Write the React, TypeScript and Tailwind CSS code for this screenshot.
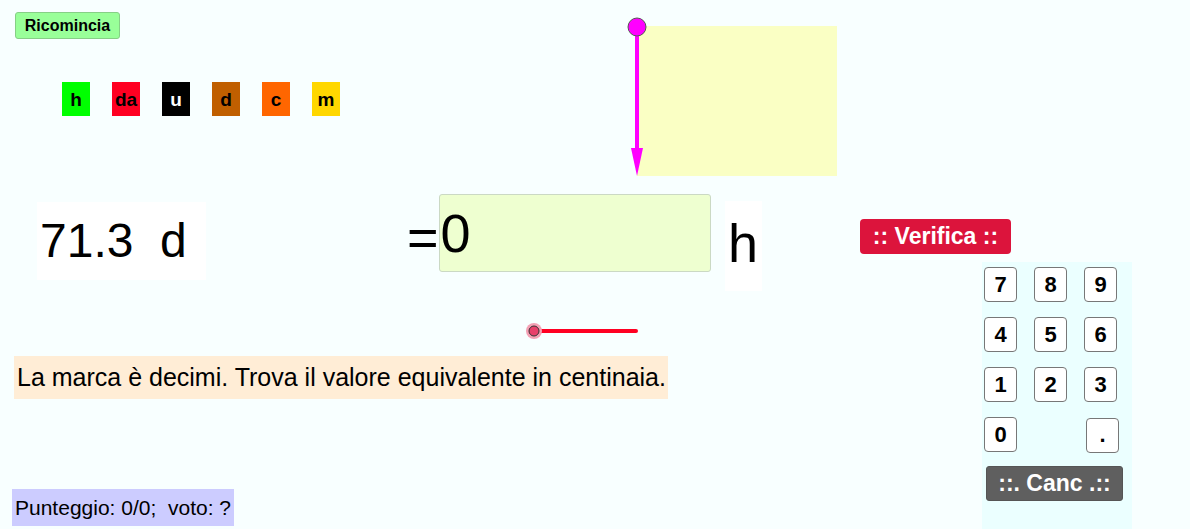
import React from 'react';

const units = [
  { label: 'h', cls: 'bg-[#00ff00] text-black' },
  { label: 'da', cls: 'bg-[#ff0022] text-black' },
  { label: 'u', cls: 'bg-black text-white' },
  { label: 'd', cls: 'bg-[#c05f00] text-black' },
  { label: 'c', cls: 'bg-[#ff6600] text-black' },
  { label: 'm', cls: 'bg-[#ffd700] text-black' },
];

const keyRows = [['7', '8', '9'], ['4', '5', '6'], ['1', '2', '3']];

const Key: React.FC<{ label: string; className?: string }> = ({ label, className = '' }) => (
  <button
    className={`flex h-[35px] w-[33px] items-center justify-center rounded-[4px] border border-[#777] bg-white text-[22px] font-bold leading-none text-black ${className}`}
  >
    {label}
  </button>
);

const App: React.FC = () => {
  return (
    <div
      className="relative h-[529px] w-[1190px] overflow-hidden bg-[#f8ffff] text-black"
      style={{ fontFamily: '"Liberation Sans", Arial, sans-serif' }}
    >
      {/* Restart + unit legend */}
      <div className="absolute left-[15px] top-[12px] flex flex-col items-start gap-[43px]">
        <button className="flex h-[27px] w-[105px] items-center justify-center rounded-[3px] border border-[#86cf86] bg-[#99ff99] text-[16px] font-bold leading-none">
          Ricomincia
        </button>
        <div className="ml-[47px] flex gap-[22px]">
          {units.map((u) => (
            <div
              key={u.label}
              className={`flex h-[34px] w-[28px] items-center justify-center text-[19px] font-bold leading-none ${u.cls}`}
            >
              {u.label}
            </div>
          ))}
        </div>
      </div>

      {/* Yellow area + vector */}
      <div className="absolute left-[637px] top-[26px] h-[150px] w-[200px] bg-[#faffc4]" />
      <svg className="absolute left-[620px] top-[10px]" width="40" height="170" viewBox="0 0 40 170">
        <line x1="17" y1="17" x2="17" y2="140" stroke="#ff00ff" strokeWidth="4" />
        <polygon points="11,138 23,138 17,166" fill="#ff00ff" />
        <circle cx="17" cy="17" r="9" fill="#ff00ff" stroke="#555" strokeWidth="1" />
      </svg>

      {/* Given value */}
      <div className="absolute left-[37px] top-[202px] flex h-[78px] w-[169px] items-center bg-white pl-[3px] text-[48px] leading-none whitespace-pre">
        71.3  d
      </div>

      {/* Equation */}
      <div className="absolute left-[407px] top-[194px] flex items-start">
        <span className="pt-[16px] text-[54px] leading-none">=</span>
        <div className="flex h-[78px] w-[272px] items-start rounded-[3px] border border-[#cbd9c4] bg-[#eeffd0] pl-[1px] pt-[11px] text-[54px] leading-none">
          0
        </div>
        <div className="ml-[14px] mt-[7px] flex h-[90px] w-[37px] items-center justify-center bg-white pb-[6px] text-[54px] leading-none">
          h
        </div>
      </div>

      {/* Slider */}
      <svg className="absolute left-[520px] top-[315px]" width="130" height="30" viewBox="0 0 130 30">
        <line x1="14" y1="16" x2="116" y2="16" stroke="#ff0022" strokeWidth="4" strokeLinecap="round" />
        <circle cx="14" cy="16" r="8" fill="#f4a0b4" />
        <circle cx="14" cy="16" r="5" fill="#e8406a" stroke="#333" strokeWidth="1" />
      </svg>

      {/* Instruction */}
      <div className="absolute left-[14px] top-[356px] flex h-[43px] w-[654px] items-center bg-[#ffedd6] pl-[3px] text-[25px] leading-none">
        La marca è decimi. Trova il valore equivalente in centinaia.
      </div>

      {/* Score */}
      <div className="absolute left-[12px] top-[489px] flex h-[37px] w-[222px] items-center bg-[#ccccff] pl-[3px] text-[21px] leading-none whitespace-pre">
        Punteggio: 0/0;  voto: ?
      </div>

      {/* Check + keypad */}
      <div className="absolute left-[860px] top-[219px] flex flex-col items-start">
        <button className="flex h-[35px] w-[151px] items-center justify-center rounded-[4px] bg-[#dc143c] text-[23px] font-bold leading-none text-white">
          :: Verifica ::
        </button>
        <div className="ml-[122px] mt-[8px] h-[267px] w-[150px] bg-[#ebffff] pl-[2px] pt-[5px]">
          <div className="flex flex-col gap-[15px]">
            {keyRows.map((row, i) => (
              <div key={i} className="flex gap-[17px]">
                {row.map((k) => (
                  <Key key={k} label={k} />
                ))}
              </div>
            ))}
            <div className="flex">
              <Key label="0" />
              <Key label="." className="ml-[69px] mt-[1px] w-[27px] items-end pb-[6px] text-[18px]" />
            </div>
          </div>
          <button className="ml-[2px] mt-[13px] flex h-[35px] w-[137px] items-center justify-center rounded-[3px] border border-[#555] bg-[#5f5f5f] text-[23px] font-bold leading-none text-white">
            ::. Canc .::
          </button>
        </div>
      </div>
    </div>
  );
};

export default App;
